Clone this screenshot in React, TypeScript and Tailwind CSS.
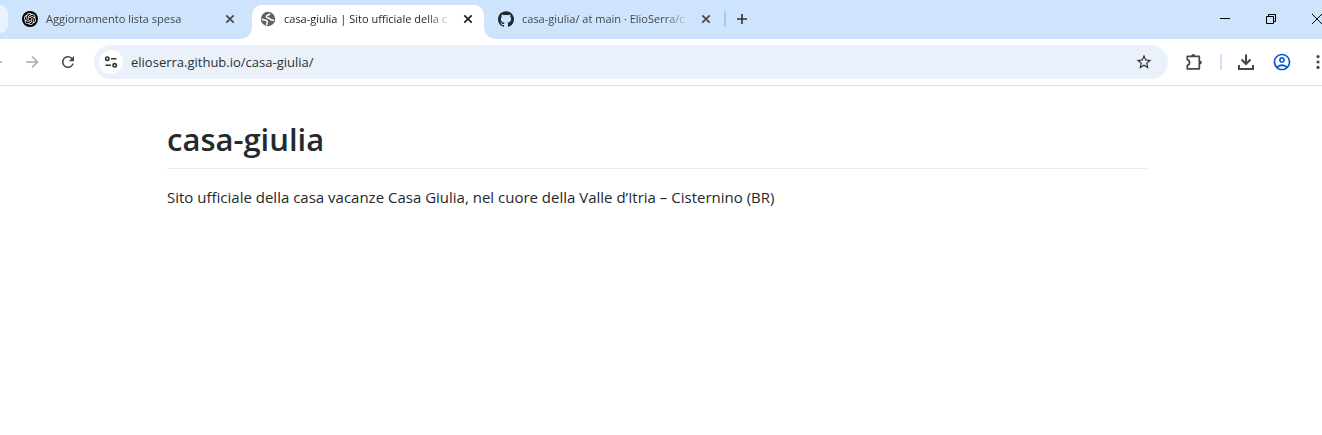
import type { ReactNode } from "react";
import { SiGithub, SiOpenai } from "react-icons/si";
import { MdOutlineAccountCircle, MdRefresh, MdStarBorder } from "react-icons/md";

type TabProps = { icon: ReactNode; title: string; active?: boolean };

function Tab({ icon, title, active = false }: TabProps) {
  return (
    <div
      role="tab"
      aria-selected={active}
      className={
        active
          ? "relative flex h-[34px] w-[232px] shrink-0 items-center gap-2 rounded-t-[10px] bg-white px-2 pb-1.5 text-[#1f1f1f]"
          : "flex h-[34px] w-[232px] shrink-0 items-center gap-2 px-2 pb-1.5 text-[#474747]"
      }
    >
      {active && (
        <>
          <span className="absolute bottom-0 -left-3 size-3 bg-white">
            <span className="block size-3 rounded-br-[12px] bg-[#cee3fc]" />
          </span>
          <span className="absolute -right-3 bottom-0 size-3 bg-white">
            <span className="block size-3 rounded-bl-[12px] bg-[#cee3fc]" />
          </span>
        </>
      )}
      <span className="size-4 shrink-0">{icon}</span>
      <span className="min-w-0 flex-1 overflow-hidden mask-r-from-85% text-[11px] leading-4 whitespace-nowrap">
        {title}
      </span>
      <button type="button" aria-label={`Chiudi ${title}`} className="flex size-4 shrink-0 items-center justify-center">
        <svg viewBox="0 0 16 16" className="size-4" fill="none" stroke="currentColor" strokeWidth="1.7">
          <path d="M4.3 4.3l7.4 7.4M11.7 4.3l-7.4 7.4" />
        </svg>
      </button>
    </div>
  );
}

function GlobeIcon() {
  return (
    <svg viewBox="0 0 16 16" className="size-4">
      <circle cx="8" cy="8" r="7.2" fill="#5f6368" />
      <g fill="none" stroke="#fff" strokeWidth="1.5" strokeLinejoin="round">
        <path d="M10 2.6C9.2 4.4 6.6 3.8 6.3 5.6c-.2 1.600 3.400 1.100 4.200 2.800.4.900 1.600 1 3.400.9" />
        <path d="M1.600 8.300l3.200.6c1.700.4 3 1.200 2.500 2.700-.2.800-.6 1.300-.5 2.600" />
      </g>
    </svg>
  );
}

function ToolButton({ label, children }: { label: string; children: ReactNode }) {
  return (
    <button type="button" aria-label={label} className="flex size-8 shrink-0 items-center justify-center rounded-full">
      {children}
    </button>
  );
}

function WindowButton({ label, children }: { label: string; children: ReactNode }) {
  return (
    <button type="button" aria-label={label} className="flex h-[38px] w-[46px] items-center justify-center text-black">
      <svg viewBox="0 0 10 10" className="size-2.5" fill="none" stroke="currentColor" strokeWidth="1">
        {children}
      </svg>
    </button>
  );
}

function TabStrip() {
  return (
    <div className="flex h-[39px] items-end overflow-hidden bg-[#cee3fc]">
      <div className="mb-1.5 h-7 w-2 shrink-0 rounded-r-[10px] bg-[#e9f2fe]" />
      <div role="tablist" className="ml-1.5 flex gap-1.5">
        <Tab
          title="Aggiornamento lista spesa"
          icon={
            <span className="flex size-4 items-center justify-center rounded-full bg-black text-white">
              <SiOpenai className="size-3" />
            </span>
          }
        />
        <Tab active title="casa-giulia | Sito ufficiale della c" icon={<GlobeIcon />} />
        <Tab title="casa-giulia/ at main · ElioSerra/c" icon={<SiGithub className="size-4 text-[#24292f]" />} />
      </div>
      <div className="ml-0.5 flex h-[34px] items-center gap-2 pb-1.5">
        <span className="h-4 w-0.5 rounded-full bg-[#9dcbfb]" />
        <button type="button" aria-label="Nuova scheda" className="flex size-4 items-center justify-center text-[#333]">
          <svg viewBox="0 0 16 16" className="size-4" fill="none" stroke="currentColor" strokeWidth="1.6">
            <path d="M8 3v10M3 8h10" />
          </svg>
        </button>
      </div>
      <div className="-mr-[18px] ml-auto flex self-start">
        <WindowButton label="Riduci a icona">
          <path d="M0 4.5h10" />
        </WindowButton>
        <WindowButton label="Ripristina">
          <path d="M.5 2.5h7v7h-7zM2.5 2.5v-2h7v7h-2" />
        </WindowButton>
        <WindowButton label="Chiudi">
          <path d="M0 0l10 10M10 0L0 10" />
        </WindowButton>
      </div>
    </div>
  );
}

function Toolbar() {
  return (
    <div className="flex h-[47px] items-center overflow-hidden border-b border-[#dedfe0] bg-white text-[#474747]">
      <div className="-ml-5 flex gap-1">
        <ToolButton label="Indietro">
          <svg viewBox="0 0 16 16" className="size-4 text-[#ababab]" fill="none" stroke="currentColor" strokeWidth="1.6">
            <path d="M14 8H3M8 2.5L2.5 8 8 13.5" />
          </svg>
        </ToolButton>
        <ToolButton label="Avanti">
          <svg viewBox="0 0 16 16" className="size-4 text-[#ababab]" fill="none" stroke="currentColor" strokeWidth="1.6">
            <path d="M2 8h11M8 2.5L13.5 8 8 13.5" />
          </svg>
        </ToolButton>
        <ToolButton label="Ricarica">
          <MdRefresh className="size-[18px]" />
        </ToolButton>
      </div>
      <div className="mx-2.5 flex h-[34px] min-w-0 flex-1 items-center rounded-full bg-[#eaf1fa] pr-[15px] pl-[5px]">
        <button
          type="button"
          aria-label="Informazioni sul sito"
          className="flex size-6 shrink-0 items-center justify-center rounded-full bg-white text-[#333]"
        >
          <svg viewBox="0 0 16 16" className="size-4" fill="none" stroke="currentColor" strokeWidth="1.6">
            <circle cx="4.3" cy="4.7" r="1.7" />
            <path d="M8 4.7h5.5M2.5 11.3H8" />
            <circle cx="11.7" cy="11.3" r="1.7" />
          </svg>
        </button>
        <input
          type="text"
          aria-label="Barra degli indirizzi"
          defaultValue="elioserra.github.io/casa-giulia/"
          className="ml-2 block min-w-0 flex-1 bg-transparent text-[13px] leading-5 text-[#2d3035] outline-none"
        />
        <button type="button" aria-label="Aggiungi ai preferiti" className="shrink-0">
          <MdStarBorder className="size-[18px] text-[#333]" />
        </button>
      </div>
      <ToolButton label="Estensioni">
        <svg viewBox="0 0 20 20" className="size-5" fill="none" stroke="currentColor" strokeWidth="1.7">
          <path d="M3.3 4.3h12v12.5h-12v-3.4c3-.6 3-5.1 0-5.7z" strokeLinejoin="round" />
          <path d="M7.3 3.9a2 2 0 0 1 4 0zM15.8 8.5a2 2 0 0 1 0 4z" fill="currentColor" stroke="none" />
        </svg>
      </ToolButton>
      <span className="mr-2 ml-2.5 h-4 w-0.5 shrink-0 rounded-full bg-[#cee3fc]" />
      <div className="-mr-3 flex gap-1">
        <ToolButton label="Download">
          <svg viewBox="0 0 20 20" className="size-5" fill="none" stroke="currentColor" strokeWidth="2">
            <path d="M10 2.5v9M5.5 7.5L10 12l4.5-4.5M3 13v4h14v-4" />
          </svg>
        </ToolButton>
        <ToolButton label="Profilo">
          <MdOutlineAccountCircle className="size-5 text-[#0b57d0]" />
        </ToolButton>
        <ToolButton label="Menu">
          <svg viewBox="0 0 16 16" className="size-4" fill="currentColor">
            <circle cx="8" cy="2.6" r="1.6" />
            <circle cx="8" cy="8" r="1.6" />
            <circle cx="8" cy="13.4" r="1.6" />
          </svg>
        </ToolButton>
      </div>
    </div>
  );
}

export default function App() {
  return (
    <div className="min-h-screen bg-white font-['Segoe_UI','Open_Sans','Noto_Sans',sans-serif]">
      <header>
        <TabStrip />
        <Toolbar />
      </header>
      <main className="pt-8 pr-2 text-[#24292e]">
        <div className="mx-auto max-w-[1012px] px-4">
          <h1 className="mb-4 border-b border-[#eaecef] pb-2 text-[31px] leading-[42px] font-semibold">casa-giulia</h1>
          <p className="text-[15px] leading-6">
            Sito ufficiale della casa vacanze Casa Giulia, nel cuore della Valle d’Itria – Cisternino (BR)
          </p>
        </div>
      </main>
    </div>
  );
}
